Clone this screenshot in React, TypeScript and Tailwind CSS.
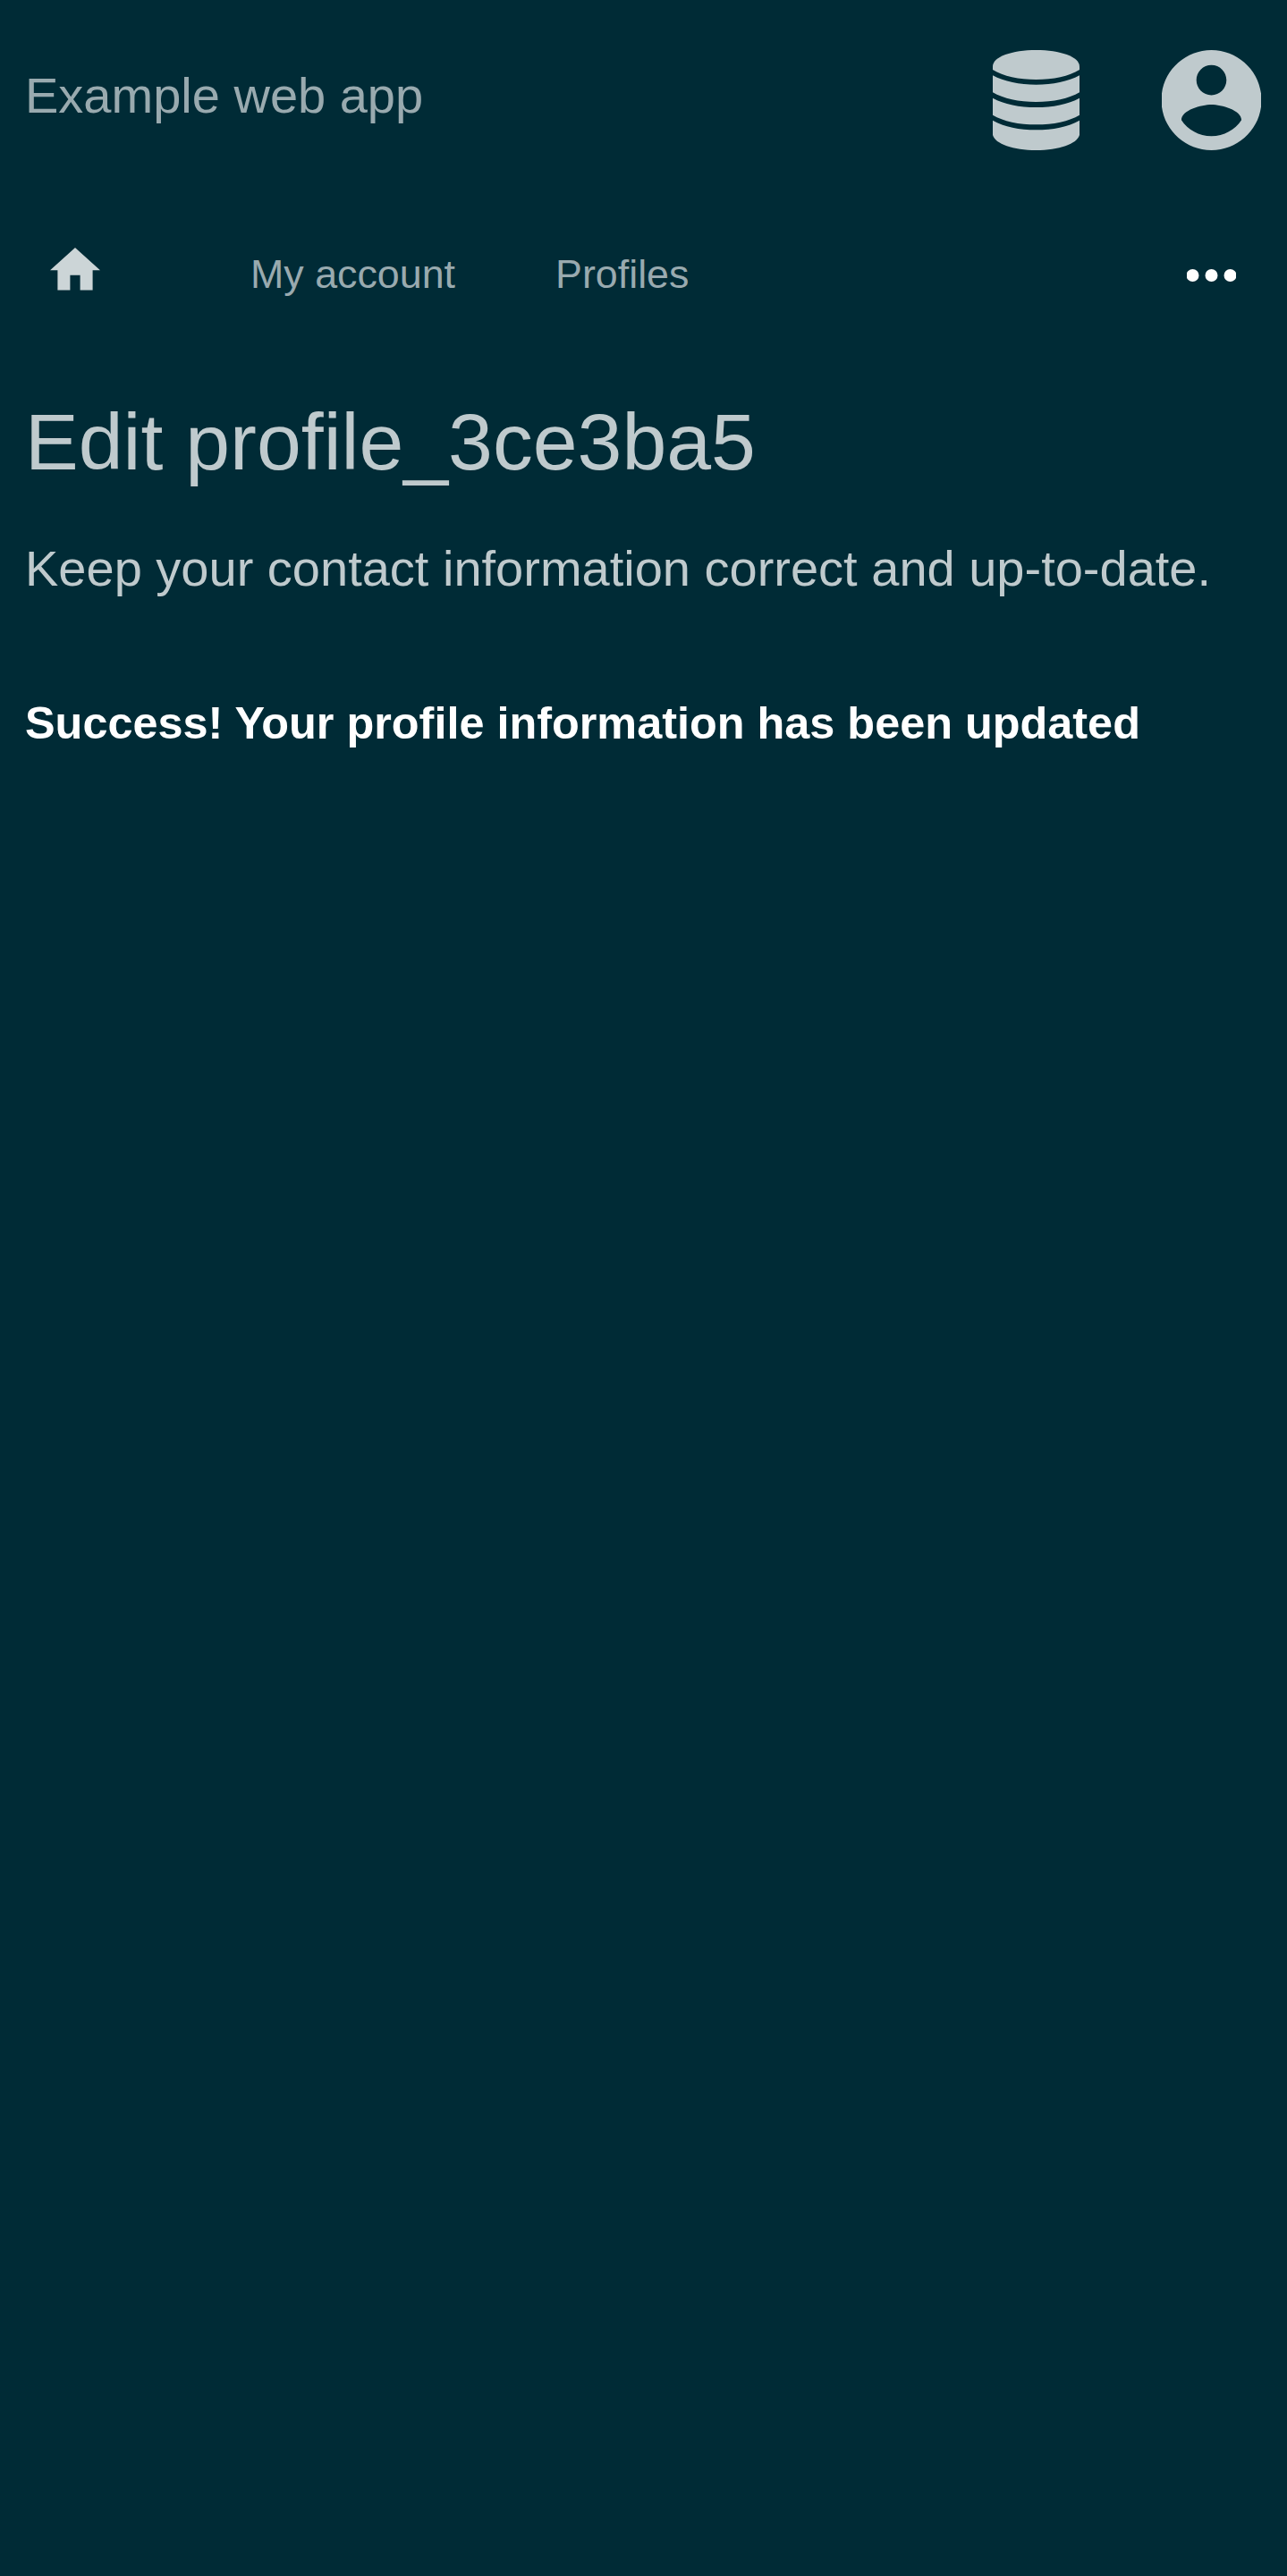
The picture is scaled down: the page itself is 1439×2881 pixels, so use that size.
function DatabaseIcon() {
  return (
    <svg className="h-[112px] w-[97px] fill-current" viewBox="0 0 291 336" preserveAspectRatio="none">
      <path d="M0 55C0 22 65 0 145.5 0S291 22 291 55V66C256 88 203 99 145.5 99S35 88 0 66Z" />
      <path d="M0 85C38 106 90 116 145.5 116S253 106 291 85V142C256 163 203 174 145.5 174S35 163 0 142Z" />
      <path d="M0 161C38 182 90 192 145.5 192S253 182 291 161V218C256 239 203 250 145.5 250S35 239 0 218Z" />
      <path d="M0 236C38 258 90 268 145.5 268S253 258 291 236V285C283 315 222 336 145.5 336S8 315 0 285Z" />
    </svg>
  );
}

function AccountIcon() {
  return (
    <svg className="h-[112px] w-[111px] fill-current" viewBox="2 2 20 20" preserveAspectRatio="xMidYMid slice">
      <path d="M12 2C6.48 2 2 6.48 2 12s4.48 10 10 10 10-4.48 10-10S17.52 2 12 2zm0 3c1.66 0 3 1.34 3 3s-1.34 3-3 3-3-1.34-3-3 1.34-3 3-3zm0 14.2c-2.5 0-4.71-1.28-6-3.22.03-1.99 4-3.08 6-3.08 1.99 0 5.97 1.09 6 3.08-1.29 1.94-3.5 3.22-6 3.22z" />
    </svg>
  );
}

function HomeIcon() {
  return (
    <svg className="mt-[53.3px] h-[47.6px] w-[56px] fill-[#ccd5d7]" viewBox="2 3 20 17">
      <path d="M10 20v-6h4v6h5v-8h3L12 3 2 12h3v8z" />
    </svg>
  );
}

function MoreIcon() {
  return (
    <svg
      className="mt-[77px] ml-auto h-[14px] w-[55px] fill-white"
      viewBox="0 0 16 4"
      preserveAspectRatio="xMidYMid slice"
    >
      <circle cx="2" cy="2" r="2" />
      <circle cx="8" cy="2" r="2" />
      <circle cx="14" cy="2" r="2" />
    </svg>
  );
}

export default function App() {
  return (
    <div className="min-h-[2881px] bg-[#002b36] font-['Liberation_Sans',sans-serif] text-[#bfcacd]">
      <header className="flex h-[224px] items-start justify-between pt-14 pr-[29px] pl-7">
        <div className="mt-[19px] text-[56px] leading-[63px] text-[#99aaaf]">Example web app</div>
        <div className="flex gap-[92px]">
          <DatabaseIcon />
          <AccountIcon />
        </div>
      </header>
      <nav className="flex h-[168px] items-start pr-[57px] pl-14 text-[44.8px] leading-[51px] text-[#99aaaf]">
        <HomeIcon />
        <span className="mt-[57px] ml-[168px]">My account</span>
        <span className="mt-[57px] ml-[112px]">Profiles</span>
        <MoreIcon />
      </nav>
      <main className="px-7 pt-[52px]">
        <h1 className="text-[89.6px] leading-[100px]">Edit profile_3ce3ba5</h1>
        <p className="mt-[60px] text-[56px] leading-[63px]">Keep your contact information correct and up-to-date.</p>
        <p className="mt-[113px] text-[50.4px] leading-[57px] font-bold text-white">
          Success! Your profile information has been updated
        </p>
      </main>
    </div>
  );
}
